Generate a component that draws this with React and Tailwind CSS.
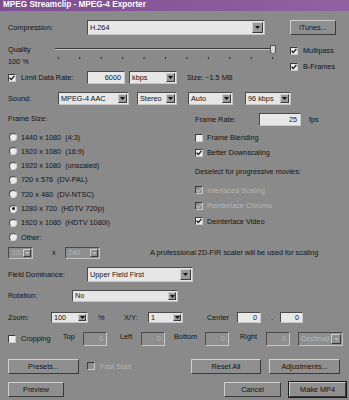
import React from 'react';

// small win-classic style widgets, scaled down to match the screenshot
const FONT = "font-['Liberation_Sans',Arial,sans-serif]";

function Check({ checked, disabled }) {
  return (
    <span
      className={`inline-flex w-[8px] h-[8px] shrink-0 items-center justify-center border border-t-[#3c3c3c] border-l-[#3c3c3c] border-b-[#c8c8c8] border-r-[#c8c8c8] ${
        disabled ? 'bg-[#8e8e8e]' : 'bg-[#ececec]'
      }`}
    >
      {checked && (
        <svg width="6" height="6" viewBox="0 0 6 6">
          <path d="M0.6 2.8 L2.3 4.6 L5.4 0.9" fill="none" stroke={disabled ? '#b8b8b8' : '#111'} strokeWidth="1.3" />
        </svg>
      )}
    </span>
  );
}

function Radio({ on }) {
  return (
    <span className="inline-flex w-[8px] h-[8px] shrink-0 items-center justify-center rounded-full bg-[#ededed] border border-t-[#4a4a4a] border-l-[#4a4a4a] border-b-[#d8d8d8] border-r-[#d8d8d8]">
      {on && <span className="w-[3px] h-[3px] rounded-full bg-[#111]" />}
    </span>
  );
}

function Select({ w, h, value, disabled, cls = '' }) {
  const aw = Math.max(h - 4, 8);
  return (
    <div
      className={`flex shrink-0 items-stretch border border-t-[#4a4a4a] border-l-[#4a4a4a] border-b-[#c4c4c4] border-r-[#c4c4c4] ${
        disabled ? 'bg-[#8e8e8e] text-[#b6b6b6]' : 'bg-[#e6e6e6] text-[#141414]'
      } ${cls}`}
      style={{ width: w, height: h }}
    >
      <span className="flex-1 flex items-center pl-[2px] overflow-hidden whitespace-nowrap">{value}</span>
      <span
        className={`flex items-center justify-center m-[1px] border border-t-[#d0d0d0] border-l-[#d0d0d0] border-b-[#3a3a3a] border-r-[#3a3a3a] ${
          disabled ? 'bg-[#8e8e8e]' : 'bg-[#9a9a9a]'
        }`}
        style={{ width: aw }}
      >
        <svg width="5" height="3" viewBox="0 0 5 3">
          <path d="M0 0 H5 L2.5 3 Z" fill={disabled ? '#b6b6b6' : '#111'} />
        </svg>
      </span>
    </div>
  );
}

function Field({ w, h, value, disabled }) {
  return (
    <div
      className={`flex shrink-0 items-center justify-end pr-[3px] border border-t-[#4a4a4a] border-l-[#4a4a4a] border-b-[#c8c8c8] border-r-[#c8c8c8] ${
        disabled ? 'bg-[#8e8e8e] text-[#b6b6b6]' : 'bg-[#e8e8e8] text-[#141414]'
      }`}
      style={{ width: w, height: h }}
    >
      {value}
    </div>
  );
}

function Btn({ w, label, def, cls = '' }) {
  return (
    <div
      className={`flex shrink-0 h-[15px] items-center justify-center text-[#141414] bg-[#8f8f8f] border border-t-[#cfcfcf] border-l-[#cfcfcf] border-b-[#3a3a3a] border-r-[#3a3a3a] ${
        def ? 'outline outline-1 outline-[#1a1a1a]' : ''
      } ${cls}`}
      style={{ width: w }}
    >
      {label}
    </div>
  );
}

function Slider() {
  const ticks = Array.from({ length: 11 }, (_, i) => 3.3 + i * 21.44);
  return (
    <svg width="222" height="24" viewBox="0 0 222 24" className="shrink-0">
      <line x1="0" y1="4.5" x2="219" y2="4.5" stroke="#3c3c3c" strokeWidth="1" />
      <line x1="0" y1="5.5" x2="219" y2="5.5" stroke="#c2c2c2" strokeWidth="1" />
      {ticks.map((x, i) => (
        <line key={i} x1={x} y1="13" x2={x} y2="15" stroke="#2a2a2a" strokeWidth="1" />
      ))}
      <path d="M215.5 1.5 H220.5 V8 L218 10.5 L215.5 8 Z" fill="#d6d6d6" stroke="#3a3a3a" strokeWidth="0.8" />
    </svg>
  );
}

const frameSizes = [
  '1440 x 1080  (4:3)',
  '1920 x 1080  (16:9)',
  '1920 x 1080  (unscaled)',
  '720 x 576  (DV-PAL)',
  '720 x 480  (DV-NTSC)',
  '1280 x 720  (HDTV 720p)',
  '1920 x 1080  (HDTV 1080i)',
  'Other:',
];

export default function App() {
  return (
    <div className={`w-[349px] h-[400px] overflow-hidden bg-[#8a8a8a] text-[#141414] text-[7.3px] leading-none whitespace-pre ${FONT}`}>
      {/* title bar */}
      <div className="h-[11px] flex items-center pl-[3px] bg-gradient-to-r from-[#7d4e90] to-[#9061a3] text-white font-bold text-[8.2px]">
        MPEG Streamclip - MPEG-4 Exporter
      </div>

      <div className="pl-[8px]">
        {/* compression */}
        <div className="mt-[9px] h-[15px] flex items-center">
          <span className="w-[79px] shrink-0">Compression:</span>
          <Select w={178} h={15} value="H.264" />
          <Btn w={46} label="iTunes..." cls="ml-[25px]" />
        </div>

        {/* quality / data rate */}
        <div className="mt-[9px] h-[40px] flex">
          <div className="w-[282px] shrink-0 flex flex-col">
            <div className="h-[24px] flex">
              <div className="w-[47px] shrink-0 flex flex-col">
                <span className="h-[12px] leading-[12px]">Quality</span>
                <span className="h-[12px] leading-[12px]">100 %</span>
              </div>
              <Slider />
            </div>
            <div className="mt-[3px] h-[13px] flex items-center">
              <div className="w-[79px] shrink-0 flex items-center gap-[5px]">
                <Check checked />
                <span>Limit Data Rate:</span>
              </div>
              <Field w={38} h={13} value="6000" />
              <Select w={48} h={13} value="kbps" cls="ml-[4px]" />
              <span className="ml-[10px]">Size: ~1.5 MB</span>
            </div>
          </div>
          <div className="flex flex-col">
            <div className="mt-[1px] h-[12px] flex items-center gap-[5px]">
              <Check checked />
              <span>Multipass</span>
            </div>
            <div className="mt-[4px] h-[12px] flex items-center gap-[5px]">
              <Check checked />
              <span>B-Frames</span>
            </div>
          </div>
        </div>

        {/* sound */}
        <div className="mt-[8px] h-[13px] flex items-center">
          <span className="w-[50px] shrink-0">Sound:</span>
          <Select w={71} h={13} value="MPEG-4 AAC" />
          <Select w={40} h={13} value="Stereo" cls="ml-[8px]" />
          <Select w={45} h={13} value="Auto" cls="ml-[11px]" />
          <Select w={46} h={13} value="96 kbps" cls="ml-[12px]" />
        </div>

        {/* frame size + right options */}
        <div className="mt-[7px] h-[133px] flex">
          <div className="w-[187px] shrink-0 flex flex-col">
            <div className="h-[14px] flex items-center">Frame Size:</div>
            <div className="mt-[4px] flex flex-col">
              {frameSizes.map((s, i) => (
                <div key={s} className="h-[14.3px] flex items-center gap-[4px] pl-[1px]">
                  <Radio on={i === 5} />
                  <span>{s}</span>
                </div>
              ))}
            </div>
          </div>
          <div className="flex flex-col">
            <div className="mt-[1px] h-[13px] flex items-center">
              <span className="w-[64px] shrink-0">Frame Rate:</span>
              <Field w={42} h={13} value="25" />
              <span className="ml-[8px]">fps</span>
            </div>
            <div className="mt-[4px] h-[15px] flex items-center gap-[4px]">
              <Check />
              <span>Frame Blending</span>
            </div>
            <div className="h-[15px] flex items-center gap-[4px]">
              <Check checked />
              <span>Better Downscaling</span>
            </div>
            <div className="mt-[5px] h-[14px] flex items-center">Deselect for progressive movies:</div>
            <div className="mt-[3.5px] h-[15.5px] flex items-center gap-[4px] text-[#b4b4b4]">
              <Check checked disabled />
              <span>Interlaced Scaling</span>
            </div>
            <div className="h-[15.5px] flex items-center gap-[4px] text-[#b4b4b4]">
              <Check checked disabled />
              <span>Reinterlace Chroma</span>
            </div>
            <div className="h-[15.5px] flex items-center gap-[4px]">
              <Check checked />
              <span>Deinterlace Video</span>
            </div>
          </div>
        </div>

        {/* other size */}
        <div className="mt-[2px] h-[12px] flex items-center">
          <Select w={25} h={12} value="320" disabled />
          <span className="ml-[19px] w-[13px] shrink-0">x</span>
          <Select w={35} h={12} value="240" disabled />
          <span className="ml-[50px]">A professional 2D-FIR scaler will be used for scaling</span>
        </div>

        {/* field dominance */}
        <div className="mt-[8px] h-[15px] flex items-center">
          <span className="w-[79px] shrink-0">Field Dominance:</span>
          <Select w={106} h={15} value="Upper Field First" />
        </div>

        {/* rotation */}
        <div className="mt-[8px] h-[12px] flex items-center">
          <span className="w-[64px] shrink-0">Rotation:</span>
          <Select w={106} h={12} value="No" />
        </div>

        {/* zoom */}
        <div className="mt-[10px] h-[11px] flex items-center">
          <span className="w-[43px] shrink-0">Zoom:</span>
          <Select w={37} h={11} value="100" />
          <span className="ml-[10px] w-[26px] shrink-0">%</span>
          <span className="w-[24px] shrink-0">X/Y:</span>
          <Select w={35} h={11} value="1" />
          <span className="ml-[24px] w-[30px] shrink-0">Center</span>
          <Field w={24} h={11} value="0" />
          <span className="ml-[10px] w-[9px] shrink-0">.</span>
          <Field w={23} h={11} value="0" />
        </div>

        {/* cropping */}
        <div className="mt-[9px] h-[14px] flex items-center">
          <div className="w-[55px] shrink-0 flex items-center gap-[5px]">
            <Check />
            <span>Cropping</span>
          </div>
          <span className="w-[20px] shrink-0 mb-[4px]">Top</span>
          <Field w={24} h={14} value="0" disabled />
          <span className="ml-[13px] w-[21px] shrink-0 mb-[4px]">Left</span>
          <Field w={24} h={14} value="0" disabled />
          <span className="ml-[9px] w-[31px] shrink-0 mb-[4px]">Bottom</span>
          <Field w={24} h={14} value="0" disabled />
          <span className="ml-[11px] w-[26px] shrink-0 mb-[4px]">Right</span>
          <Field w={24} h={14} value="0" disabled />
          <Select w={45} h={14} value="Destination" disabled cls="ml-[8px]" />
        </div>

        {/* buttons */}
        <div className="mt-[13px] h-[15px] flex items-center">
          <Btn w={71} label="Presets..." />
          <span className="ml-[8px]">
            <Check disabled />
          </span>
          <span className="ml-[5px] w-[91px] shrink-0 text-[#b4b4b4]">Fast Start</span>
          <Btn w={70} label="Reset All" />
          <Btn w={71} label="Adjustments..." cls="ml-[8px]" />
        </div>
        <div className="mt-[8px] h-[15px] flex items-center">
          <Btn w={56} label="Preview" />
          <Btn w={57} label="Cancel" cls="ml-[160px]" />
          <Btn w={57} label="Make MP4" def cls="ml-[8px]" />
        </div>
      </div>
    </div>
  );
}
